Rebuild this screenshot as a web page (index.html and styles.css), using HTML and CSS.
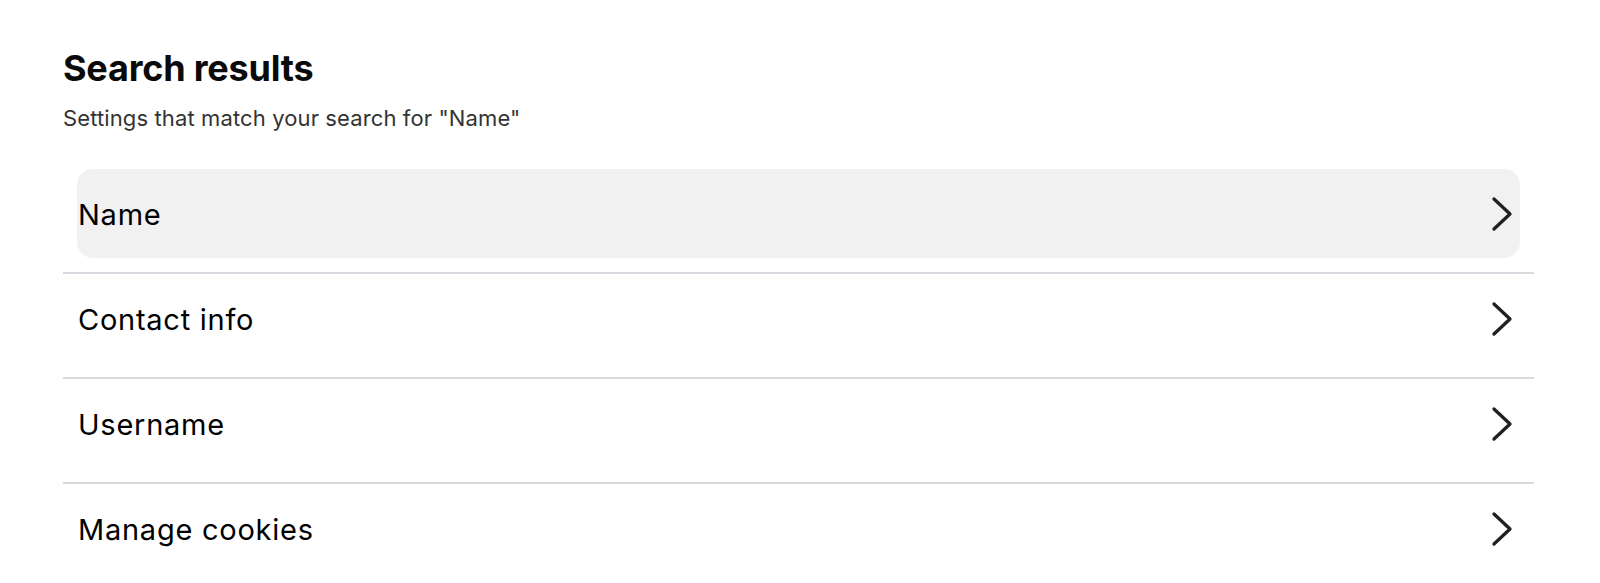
FILE: index.html
```html
<!DOCTYPE html>
<html lang="en">
<head>
<meta charset="utf-8">
<title>Search results</title>
<link rel="stylesheet" href="styles.css">
</head>
<body>
<main class="page">
  <h1 class="title">Search results</h1>
  <p class="subtitle">Settings that match your search for "Name"</p>
  <ul class="results">
    <li class="item">
      <div class="row row--active">
        <span class="label">Name</span>
        <svg class="chev" viewBox="0 0 22 36" width="22" height="36" aria-hidden="true"><polyline points="3,3 19,18 3,33"/></svg>
      </div>
    </li>
    <li class="item">
      <div class="row">
        <span class="label">Contact info</span>
        <svg class="chev" viewBox="0 0 22 36" width="22" height="36" aria-hidden="true"><polyline points="3,3 19,18 3,33"/></svg>
      </div>
    </li>
    <li class="item">
      <div class="row">
        <span class="label">Username</span>
        <svg class="chev" viewBox="0 0 22 36" width="22" height="36" aria-hidden="true"><polyline points="3,3 19,18 3,33"/></svg>
      </div>
    </li>
    <li class="item">
      <div class="row">
        <span class="label">Manage cookies</span>
        <svg class="chev" viewBox="0 0 22 36" width="22" height="36" aria-hidden="true"><polyline points="3,3 19,18 3,33"/></svg>
      </div>
    </li>
  </ul>
</main>
</body>
</html>
```

FILE: styles.css
```css
* { box-sizing: border-box; }

html, body {
  margin: 0;
  padding: 0;
  background: #ffffff;
}

body {
  font-family: Inter, "Liberation Sans", Arial, sans-serif;
  color: #111111;
}

.page {
  padding: 46px 66px 0 63px;
}

.title {
  margin: 0;
  font-size: 36px;
  line-height: 44px;
  font-weight: 700;
  letter-spacing: -0.2px;
  color: #0a0a0a;
}

.subtitle {
  margin: 14px 0 0 0;
  font-size: 22px;
  line-height: 28px;
  font-weight: 400;
  letter-spacing: 0.12px;
  color: #333333;
}

.results {
  list-style: none;
  margin: 37px 0 0 0;
  padding: 0;
}

.item {
  padding: 0 14px 14px 14px;
  border-bottom: 2px solid #d9dadf;
}

.row {
  height: 89px;
  display: flex;
  align-items: center;
  justify-content: space-between;
  padding: 0 7px 0 1px;
  border-radius: 16px;
}

.row--active {
  background: #f1f1f1;
}

.label {
  font-size: 29px;
  line-height: 36px;
  padding-top: 2px;
  letter-spacing: 0.75px;
  font-weight: 400;
  color: #000000;
}

.chev {
  display: block;
  fill: none;
  stroke: #211f22;
  stroke-width: 3.3;
  stroke-linecap: round;
  stroke-linejoin: round;
}
```
